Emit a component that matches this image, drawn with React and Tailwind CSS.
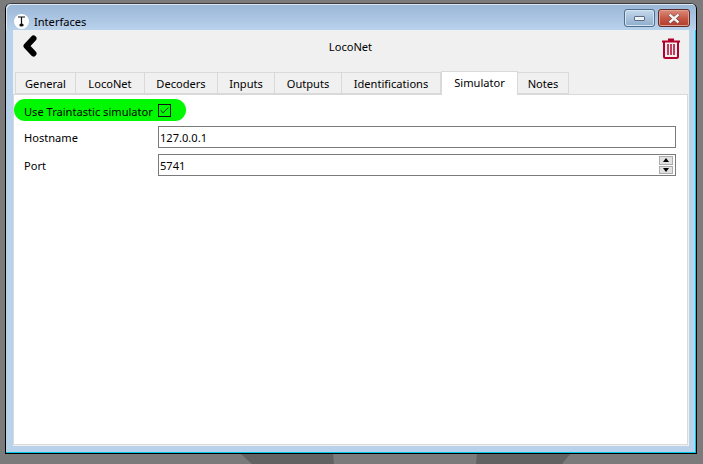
import { Check } from "lucide-react";

const tabs = ["General", "LocoNet", "Decoders", "Inputs", "Outputs", "Identifications", "Simulator", "Notes"];
const tabWidths = [61, 69, 73, 57, 67, 99, 77, 51];

function TrashIcon() {
  return (
    <svg width="18" height="21" viewBox="0 0 18 21" fill="none" stroke="#b3002d">
      <path d="M6 1.5h6M0 3.5h18" strokeWidth="2" />
      <path d="M2 4v14.5a1.5 1.5 0 0 0 1.5 1.5h11a1.5 1.5 0 0 0 1.5-1.5V4" strokeWidth="2" />
      <path d="M6 6v11M9 6v11M12 6v11" strokeWidth="1.5" />
    </svg>
  );
}

function CaptionButtons() {
  return (
    <div className="flex gap-[3px] h-[18px] mt-[5px]">
      <div className="w-[31px] rounded-[3px] border border-[#4f6c8c] bg-gradient-to-b from-[#c4d8ec] to-[#8fadcb] flex items-center justify-center shadow-[inset_0_0_0_1px_#d6e4f2]">
        <div className="w-[11px] h-[5px] mt-[1px] bg-[#eef2f6] border border-[#5a6f85] rounded-[1px]" />
      </div>
      <div className="w-[32px] rounded-[3px] border border-[#5e2a2a] bg-gradient-to-b from-[#dc8a7c] via-[#c75a48] to-[#b03a2a] flex items-center justify-center shadow-[inset_0_0_0_1px_#e0a090]">
        <svg width="14" height="11" viewBox="0 0 14 11">
          <path d="M2.5 1.5l9 8M11.5 1.5l-9 8" stroke="#5a3030" strokeWidth="3.6" />
          <path d="M2.5 1.5l9 8M11.5 1.5l-9 8" stroke="#f4f4f4" strokeWidth="2.4" />
        </svg>
      </div>
    </div>
  );
}

export default function App() {
  return (
    <div className="relative w-[703px] h-[464px] overflow-hidden bg-[#7b7b7b] font-['Noto_Sans',sans-serif] text-[11.1px] text-black">
      {/* background shapes under the window */}
      <svg className="absolute left-0 top-0" width="703" height="464">
        <path d="M240 453L252 464H334L333 453ZM477 453L476 464H562L571 453Z" fill="#626262" />
      </svg>

      <div className="relative ml-[5px] mt-[3px] w-[692px] h-[451px] rounded-t-[6px] border border-black border-t-[#3c3c3c] bg-[#b9d2ec] shadow-[inset_-1px_-1px_0_#00c8e8]">
        {/* title bar */}
        <div className="h-[26px] rounded-t-[5px] bg-gradient-to-b from-[#9ab6d6] to-[#b9d2ec] shadow-[inset_1px_1px_0_#dfe7f0] flex items-start pl-[8px] pr-[6px]">
          <div className="mt-[10px] w-[15px] h-[15px] rounded-full bg-white flex items-center justify-center">
            <svg width="9" height="11" viewBox="0 0 9 11">
              <path d="M1 1h7M4.5 1v7" stroke="#111" strokeWidth="1.2" />
              <ellipse cx="4.5" cy="9" rx="2.2" ry="1.5" fill="#111" />
            </svg>
          </div>
          <span className="ml-[5px] mt-[11px] leading-[14px]">Interfaces</span>
          <div className="ml-auto">
            <CaptionButtons />
          </div>
        </div>

        {/* client area */}
        <div className="mx-[7px] h-[416px] bg-[#f0f0f0] flex flex-col">
          <div className="relative h-[40px] shrink-0 flex items-start justify-center">
            <svg className="absolute left-[9px] top-[5px]" width="15" height="22" viewBox="0 0 15 22">
              <path d="M11.5 3.5L4.5 11L11.5 18.5" fill="none" stroke="#000" strokeWidth="6" strokeLinecap="round" strokeLinejoin="round" />
            </svg>
            <span className="mt-[10px] leading-[14px] -ml-[1px]">LocoNet</span>
            <div className="absolute right-[9px] top-[8px]">
              <TrashIcon />
            </div>
          </div>

          {/* tabs */}
          <div className="flex h-[24px] shrink-0 pl-[2px] items-end">
            {tabs.map((t, i) => {
              const active = t === "Simulator";
              return (
                <div
                  key={t}
                  style={{ width: tabWidths[i] }}
                  className={
                    active
                      ? "h-[24px] bg-white border border-[#d9d9d9] border-b-0 flex items-center justify-center -mb-[1px] relative z-10 pb-[1px]"
                      : "h-[22px] pt-[2px] bg-[#f0f0f0] border border-[#d9d9d9] border-l-0 first:border-l flex items-center justify-center"
                  }
                >
                  {t}
                </div>
              );
            })}
          </div>

          {/* panel */}
          <div className="flex-1 mr-[1px] mb-[1px] bg-white border border-[#d9d9d9] pl-[10px] pr-[11px] pt-[5px]">
            <div className="relative h-[22px] flex items-center">
              <div className="absolute -left-[10px] -top-[1px] w-[172px] h-[22px] rounded-full bg-[#00f800]" />
              <span className="relative pt-[2px]">Use Traintastic simulator</span>
              <div className="relative ml-[5px] w-[13px] h-[13px] border border-[#111] flex items-center justify-center -mt-[1px]">
                <Check size={13} strokeWidth={2} color="#111" />
              </div>
            </div>
            <div className="flex items-center h-[22px] mt-[4px]">
              <span className="w-[134px] pt-[2px]">Hostname</span>
              <div className="flex-1 h-[22px] border border-[#7a7a7a] pl-[1px] pt-[2px] flex items-center bg-white">127.0.0.1</div>
            </div>
            <div className="flex items-center h-[22px] mt-[6px]">
              <span className="w-[134px] pt-[2px]">Port</span>
              <div className="flex-1 h-[22px] border border-[#7a7a7a] pl-[1px] flex items-center bg-white">
                <span className="flex-1 pt-[2px]">5741</span>
                <div className="w-[14px] h-[18px] mr-[2px] flex flex-col gap-[1px]">
                  <div className="flex-1 bg-[#e1e1e1] border border-[#adadad] flex items-center justify-center">
                    <div className="w-0 h-0 border-x-[3.5px] border-x-transparent border-b-[4px] border-b-black" />
                  </div>
                  <div className="flex-1 bg-[#e1e1e1] border border-[#adadad] flex items-center justify-center">
                    <div className="w-0 h-0 border-x-[3.5px] border-x-transparent border-t-[4px] border-t-black" />
                  </div>
                </div>
              </div>
            </div>
          </div>
        </div>
      </div>
    </div>
  );
}
